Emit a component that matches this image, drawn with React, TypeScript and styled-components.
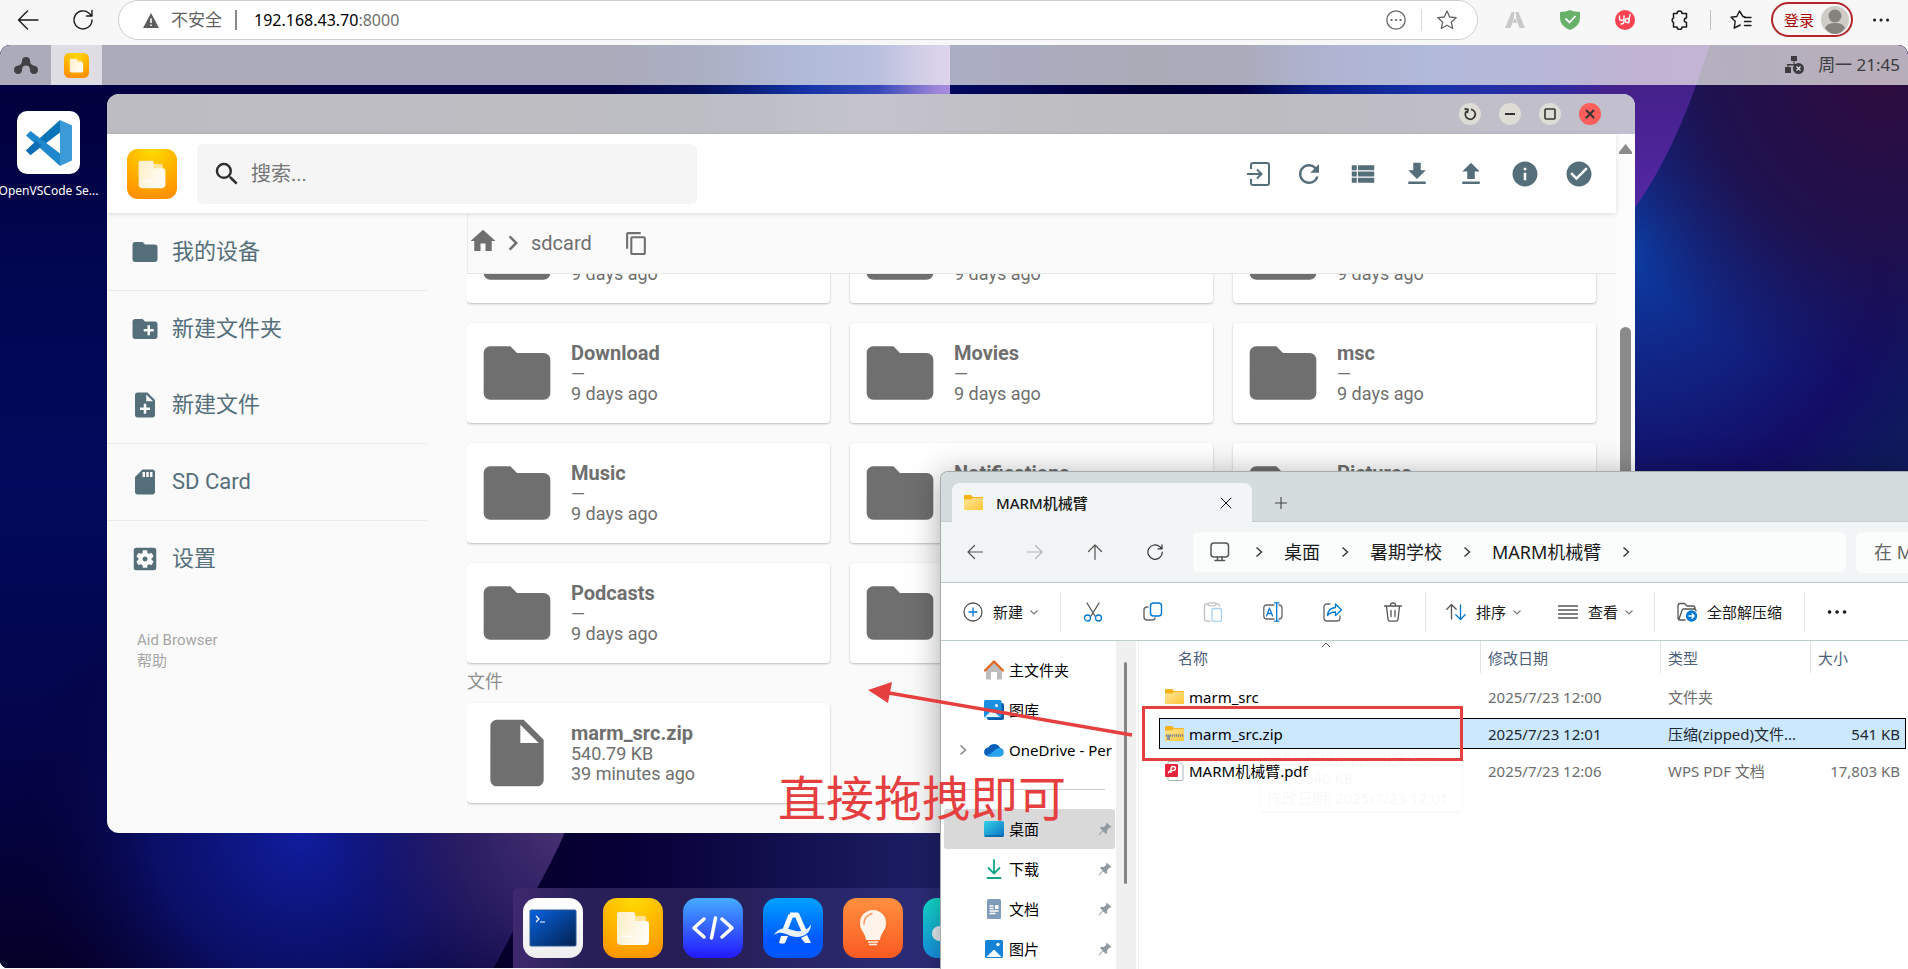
import React from "react";
import styled, { createGlobalStyle } from "styled-components";
import {
  MdFolder,
  MdCreateNewFolder,
  MdNoteAdd,
  MdSdStorage,
  MdSettingsApplications,
  MdInsertDriveFile,
  MdHome,
  MdChevronRight,
  MdContentCopy,
  MdRefresh,
  MdViewList,
  MdFileDownload,
  MdFileUpload,
  MdInfo,
  MdCheckCircle,
  MdSearch,
} from "react-icons/md";

const GlobalStyle = createGlobalStyle`
  *, *::before, *::after { box-sizing: border-box; }
  html, body, #root { height: 100%; }
  body {
    margin: 0;
    overflow: hidden;
    font-family: "Noto Sans", "Noto Sans CJK SC", sans-serif;
    background: #f7f7f7;
  }
  button {
    border: 0;
    padding: 0;
    margin: 0;
    background: none;
    color: inherit;
    font: inherit;
    cursor: pointer;
  }
  input { font: inherit; }
  svg { display: block; flex: none; }
`;

const Page = styled.div`
  position: relative;
  height: 100vh;
  display: grid;
  grid-template-rows: 45px minmax(0, 1fr);
  padding-bottom: 1px;
  overflow: hidden;
`;

/* ---------- browser toolbar ---------- */

const BrowserBar = styled.header`
  display: flex;
  align-items: flex-start;
  padding-left: 8px;
  background: #f7f7f7;
  color: #1b1b1b;
`;

const BarButton = styled.button<{ $w?: number }>`
  flex: none;
  width: ${(p) => p.$w ?? 55}px;
  height: 40px;
  display: flex;
  align-items: center;
  justify-content: center;
`;

const HistoryButtons = styled.div`
  flex: none;
  display: flex;
  gap: 15px;
`;

const BarDivider = styled.span`
  width: 1px;
  height: 20px;
  margin: 10px 3px;
  background: #bdbdbd;
`;

const AddressPill = styled.div`
  flex: 1;
  min-width: 0;
  height: 40px;
  margin: 0 9px 0 15px;
  padding: 0 20px 0 24px;
  display: flex;
  align-items: center;
  border: 1px solid #cfcfcf;
  border-radius: 20px;
  background: #fff;
  font-size: 16px;
  color: #000;
`;

const Insecure = styled.span`
  margin-left: 12px;
  padding-right: 13px;
  border-right: 2px solid #8a8a8a;
  font-size: 17px;
  line-height: 20px;
  color: #5f5f5f;
`;

const Url = styled.span`
  flex: 1;
  margin-left: 17px;
  line-height: 24px;
  span { color: #6f6f6f; }
`;

const PillDivider = styled.span`
  width: 1px;
  height: 22px;
  margin: 0 15px;
  background: #d8d8d8;
`;

const LoginButton = styled.button`
  flex: none;
  width: 82px;
  height: 35px;
  margin: 2px 0 0 3px;
  padding: 0 2px 0 11px;
  display: flex;
  align-items: center;
  justify-content: space-between;
  border: 2px solid #b3262b;
  border-radius: 18px;
  font-size: 15px;
  line-height: 20px;
  color: #a80000;
`;

/* ---------- remote desktop ---------- */

const Desktop = styled.main`
  position: relative;
  min-height: 0;
  display: flex;
  flex-direction: column;
  border-radius: 10px 10px 8px 8px;
  overflow: hidden;
  background: #02003e;
`;

const Wallpaper = styled.svg`
  position: absolute;
  inset: 0;
  width: 100%;
  height: 100%;
`;

const SystemBar = styled.div`
  position: relative;
  height: 40px;
  display: flex;
  background: rgba(244, 243, 240, 0.7);
  color: #3c3c40;
`;

const SystemCell = styled.button<{ $active?: boolean }>`
  width: 51px;
  display: flex;
  align-items: center;
  justify-content: center;
  background: ${(p) => (p.$active ? "rgba(255,255,255,.6)" : "transparent")};
`;

const Clock = styled.div`
  margin-left: auto;
  padding-right: 8px;
  display: flex;
  align-items: center;
  gap: 14px;
  font-size: 17px;
  line-height: 24px;
`;

const Shortcut = styled.button`
  position: relative;
  width: 97px;
  margin-top: 26px;
  display: flex;
  flex-direction: column;
  align-items: center;
  gap: 8px;
  font-size: 12px;
  line-height: 18px;
  color: #fff;
  white-space: nowrap;
`;

const ShortcutTile = styled.span`
  width: 63px;
  height: 63px;
  display: flex;
  align-items: center;
  justify-content: center;
  border-radius: 10px;
  background: #fff;
`;

const Dock = styled.nav`
  position: relative;
  width: 882px;
  height: 80px;
  margin: auto auto 0;
  padding: 10px;
  display: flex;
  gap: 20px;
  border-radius: 6px 6px 0 0;
  background: linear-gradient(90deg, #40296f 0, #2a2059 60px, #261d56 180px, #2b2c76 400px);
`;

const DockIcon = styled.button<{ $bg: string }>`
  width: 60px;
  height: 60px;
  display: flex;
  align-items: center;
  justify-content: center;
  border-radius: 14px;
  background: ${(p) => p.$bg};
`;

/* ---------- file browser window ---------- */

const Win = styled.section`
  position: absolute;
  top: 49px;
  left: 107px;
  right: 273px;
  bottom: 135px;
  display: flex;
  flex-direction: column;
  border-radius: 12px;
  overflow: hidden;
  background: #fafafa;
  font-family: Roboto, "Noto Sans CJK SC", sans-serif;
`;

const TitleBar = styled.div`
  height: 40px;
  flex: none;
  padding-right: 34px;
  display: flex;
  align-items: center;
  justify-content: flex-end;
  gap: 18px;
  background: linear-gradient(90deg, #bdbcc2 0%, #bdbdc2 30%, #bcbfc6 42%, #c5c4ce 50%, #bfbec3 60%, #bcbcc1 76%, #c2c0cf 100%);
`;

const WinButton = styled.button<{ $close?: boolean }>`
  width: 22px;
  height: 22px;
  display: flex;
  align-items: center;
  justify-content: center;
  border-radius: 50%;
  background: ${(p) => (p.$close ? "#ff5f5a" : "#dddcd5")};
`;

const WinBody = styled.div`
  flex: 1;
  min-height: 0;
  display: flex;
`;

const WinContent = styled.div`
  flex: 1;
  min-width: 0;
  display: flex;
  flex-direction: column;
`;

const ScrollTrack = styled.div`
  width: 19px;
  padding: 10px 3px 0;
  display: flex;
  flex-direction: column;
  align-items: center;
  background: #fcfcfc;
`;

const ScrollThumb = styled.div`
  width: 11px;
  height: 420px;
  margin-top: 173px;
  border-radius: 6px;
  background: #8b8b8b;
`;

const AppHeader = styled.div`
  position: relative;
  z-index: 1;
  height: 79px;
  flex: none;
  padding: 0 10px 0 20px;
  display: flex;
  align-items: center;
  gap: 20px;
  background: #fff;
  box-shadow: 0 1px 5px rgba(0, 0, 0, 0.12);
`;

const SearchBox = styled.label`
  width: 500px;
  height: 60px;
  padding: 0 15px;
  display: flex;
  align-items: center;
  gap: 9px;
  border-radius: 6px;
  background: #f5f5f5;
  color: #2f2f2f;
  input {
    flex: 1;
    min-width: 0;
    border: 0;
    padding: 0;
    outline: 0;
    background: none;
    font-size: 20px;
    line-height: 30px;
  }
  input::placeholder { color: #757575; }
`;

const Actions = styled.div`
  margin-left: auto;
  display: flex;
`;

const ActionButton = styled.button<{ $w?: number }>`
  width: ${(p) => p.$w ?? 54}px;
  height: 50px;
  display: flex;
  align-items: center;
  justify-content: center;
  color: #546e7a;
`;

const Columns = styled.div`
  flex: 1;
  min-height: 0;
  display: flex;
`;

const Sidebar = styled.nav`
  width: 320px;
  margin-right: 40px;
  flex: none;
`;

const SideGroup = styled.div`
  padding-top: 1px;
  & + & { border-top: 1px solid #ececec; padding-top: 0; }
`;

const SideItem = styled.button`
  width: 100%;
  height: 76px;
  padding-left: 23px;
  display: flex;
  align-items: center;
  gap: 12px;
  font-size: 22px;
  line-height: 26px;
  color: #546e7a;
`;

const Credits = styled.div`
  padding: 33px 30px 0;
  display: flex;
  flex-direction: column;
  font-size: 15px;
  line-height: 21px;
  color: #a5a5a5;
  a { color: inherit; text-decoration: none; }
`;

const Listing = styled.div`
  flex: 1;
  min-width: 0;
  display: flex;
  flex-direction: column;
  color: #6f6f6f;
`;

const Crumbs = styled.div`
  height: 61px;
  flex: none;
  display: flex;
  align-items: center;
  border-left: 1px solid #ececec;
  border-bottom: 1px solid #e6e6e6;
  font-size: 20px;
  a {
    display: flex;
    color: inherit;
    text-decoration: none;
  }
  a:first-child { padding-bottom: 4px; }
  a + svg { margin-right: 3px; }
  button { margin-left: 32px; }
`;

const Scroller = styled.div`
  flex: 1;
  min-height: 0;
  padding: 0 20px 30px 0;
  display: flex;
  flex-direction: column;
  justify-content: flex-end;
  overflow: hidden;
`;

const CardGrid = styled.div`
  flex: none;
  display: grid;
  grid-template-columns: repeat(3, 1fr);
  gap: 20px;
`;

const SectionTitle = styled.h2`
  margin: 0;
  height: 40px;
  flex: none;
  font-size: 18px;
  font-weight: 400;
  line-height: 38px;
  color: #8f8f8f;
`;

const Card = styled.article`
  height: 100px;
  padding: 0 10px;
  display: flex;
  align-items: center;
  gap: 14px;
  border-radius: 4px;
  background: #fff;
  box-shadow: 0 1px 3px rgba(0, 0, 0, 0.1), 0 1px 2px rgba(0, 0, 0, 0.16);
`;

const CardText = styled.div`
  display: flex;
  flex-direction: column;
  font-size: 18px;
  line-height: 20px;
  strong { font-size: 20px; font-weight: 700; line-height: 22px; }
`;

/* ---------- local explorer window ---------- */

const Explorer = styled.section`
  position: absolute;
  top: 471px;
  left: 940px;
  right: 0;
  bottom: 0;
  display: flex;
  flex-direction: column;
  border: solid #a4abab;
  border-width: 1px 0 0 1px;
  border-radius: 8px 0 0 0;
  overflow: hidden;
  background: #fff;
  font-size: 15px;
  line-height: 20px;
  color: #1a1a1a;
`;

const ExplorerShadow = styled.div`
  position: absolute;
  top: 471px;
  left: 940px;
  right: 0;
  bottom: 0;
  border-radius: 8px 0 0 0;
  box-shadow: 0 4px 32px rgba(0, 0, 0, 0.34);
`;

const TabStrip = styled.div`
  height: 50px;
  flex: none;
  padding-left: 11px;
  display: flex;
  align-items: flex-end;
  background: #d4dcde;
  box-shadow: inset 0 -1px #c6cfd1;
`;

const Tab = styled.div`
  width: 300px;
  height: 39px;
  padding: 0 20px 0 12px;
  display: flex;
  align-items: center;
  gap: 13px;
  border-radius: 8px 8px 0 0;
  background: #f1f5f6;
  font-weight: 500;
  button { margin-left: auto; }
`;

const NewTab = styled.button`
  width: 58px;
  height: 39px;
  display: flex;
  align-items: center;
  justify-content: center;
`;

const NavRow = styled.div`
  height: 61px;
  flex: none;
  padding-left: 4px;
  display: flex;
  align-items: center;
  border-bottom: 1px solid #bdcaca;
  background: #f1f5f6;
`;

const ToolButton = styled.button`
  flex: none;
  width: 60px;
  height: 40px;
  display: flex;
  align-items: center;
  justify-content: center;
`;

const PathBox = styled.div`
  flex: 1;
  min-width: 0;
  height: 40px;
  margin: 0 10px 0 8px;
  padding-left: 17px;
  display: flex;
  align-items: center;
  gap: 20px;
  border-radius: 6px;
  background: #fbfdfd;
  font-size: 18px;
  svg:first-child { margin-right: 4px; }
`;

const PathSearch = styled.input`
  width: 52px;
  height: 41px;
  border: 0;
  padding: 0 0 0 18px;
  border-radius: 6px 0 0 6px;
  outline: 0;
  background: #fbfdfd;
  font-size: 18px;
  &::placeholder { color: #666; }
`;

const CommandBar = styled.div`
  height: 58px;
  flex: none;
  display: flex;
  align-items: center;
  border-bottom: 1px solid #bdcaca;
`;

const Command = styled.button<{ $l?: number; $r?: number }>`
  flex: none;
  height: 40px;
  padding: 0 ${(p) => p.$r ?? 18}px 0 ${(p) => p.$l ?? 18}px;
  display: flex;
  align-items: center;
  gap: 10px;
  span + svg { margin-left: -4px; }
`;

const CommandDivider = styled.span`
  width: 1px;
  height: 40px;
  margin: 0 2px;
  background: #e5e5e5;
`;

const ExplorerBody = styled.div`
  flex: 1;
  min-height: 0;
  display: flex;
`;

const Places = styled.nav`
  width: 175px;
  flex: none;
  padding: 9px 1px 0 3px;
  overflow: hidden;
`;

const Place = styled.button<{ $active?: boolean }>`
  width: 100%;
  height: 40px;
  padding: 0 3px 0 14px;
  display: grid;
  grid-template-columns: 14px 20px minmax(0, 1fr) auto;
  column-gap: 5px;
  align-items: center;
  border-radius: 3px;
  background: ${(p) => (p.$active ? "#d9d9d9" : "transparent")};
  text-align: left;
  white-space: nowrap;
  color: #000;
`;

const PlaceIcon = styled.span`
  width: 20px;
  margin-left: 7px;
`;

const PlaceLabel = styled.span`
  margin-left: 7px;
`;

const PlaceRule = styled.hr`
  height: 1px;
  margin: 19px 10px 19px 20px;
  border: 0;
  background: #c9d0d2;
`;

const PlacesTrack = styled.div`
  width: 20px;
  flex: none;
  padding: 21px 0 0 8px;
  background: #f0f0f0;
  &::before {
    content: "";
    display: block;
    width: 3px;
    height: 222px;
    border-radius: 2px;
    background: #858585;
  }
`;

const FilesPane = styled.div`
  position: relative;
  flex: 1;
  min-width: 0;
  margin-left: 2px;
  padding: 0 2px 0 20px;
  border-left: 1px solid #efefef;
`;

const SortMark = styled.svg`
  position: absolute;
  top: 1px;
  left: 182px;
`;

const FileTable = styled.table`
  width: 100%;
  table-layout: fixed;
  border-collapse: separate;
  border-spacing: 0;
  th {
    height: 37px;
    padding: 0 0 4px 8px;
    font-weight: 400;
    text-align: left;
    color: #4c607a;
    background: linear-gradient(#e2e2e2, #e2e2e2) 0 0 / 1px 32px no-repeat;
  }
  th:first-child { padding-left: 19px; background: none; }
  td {
    height: 37px;
    padding: 0 0 0 8px;
    border: solid transparent;
    border-width: 3px 0;
    background-clip: padding-box;
    color: #6d6d6d;
    white-space: nowrap;
  }
  td:first-child { padding-left: 6px; color: #000; }
  td:last-child { padding-right: 6px; text-align: right; }
`;

const FileRow = styled.tr<{ $selected?: boolean }>`
  ${(p) =>
    p.$selected
      ? `
    td { background-color: #cce8ff; color: #1e2a33; box-shadow: inset 0 1px #000, inset 0 -1px #000; }
    td:first-child { box-shadow: inset 1px 0 #000, inset 0 1px #000, inset 0 -1px #000; }
    td:last-child { box-shadow: inset -1px 0 #000, inset 0 1px #000, inset 0 -1px #000; }
  `
      : ""}
`;

const FileName = styled.span`
  display: flex;
  align-items: center;
  gap: 5px;
`;

const FadingTip = styled.div`
  position: absolute;
  top: 107px;
  left: 122px;
  width: 200px;
  padding: 0 4px 3px 6px;
  border-radius: 4px;
  box-shadow: 0 2px 4px rgba(0, 0, 0, 0.04);
  line-height: 20px;
  white-space: nowrap;
  color: rgba(0, 0, 0, 0.05);
`;

/* ---------- annotation ---------- */

const Marker = styled.svg`
  position: absolute;
  top: 670px;
  left: 860px;
`;

const MarkerBox = styled.div`
  position: absolute;
  top: 706px;
  left: 1142px;
  width: 321px;
  height: 55px;
  border: 3px solid #e5403f;
`;

const MarkerText = styled.p`
  position: absolute;
  top: 765px;
  left: 778px;
  margin: 0;
  font-family: "Noto Sans CJK SC", sans-serif;
  font-size: 48px;
  line-height: 60px;
  white-space: nowrap;
  color: #e5403f;
`;

/* ---------- drawings ---------- */

const Line: React.FC<{
  s?: number;
  w?: number;
  c?: string;
  box?: number;
  children: React.ReactNode;
}> = ({ s = 20, w = 1.3, c = "currentColor", box = 20, children }) => (
  <svg
    width={s}
    height={s}
    viewBox={`0 0 ${box} ${box}`}
    fill="none"
    stroke={c}
    strokeWidth={w}
    strokeLinecap="round"
    strokeLinejoin="round"
    aria-hidden="true"
  >
    {children}
  </svg>
);

const BLUE = "#0078d4";

const Backdrop = () => (
  <Wallpaper viewBox="0 0 1908 923" preserveAspectRatio="none" aria-hidden="true">
    <defs>
      <linearGradient id="top" x1="0" x2="1" y1="0" y2="0">
        <stop offset="0" stopColor="#02003c" />
        <stop offset=".32" stopColor="#020044" />
        <stop offset=".37" stopColor="#04125e" />
        <stop offset=".42" stopColor="#1432a4" />
        <stop offset=".46" stopColor="#3447b8" />
        <stop offset=".49" stopColor="#9a84d8" />
        <stop offset=".4979" stopColor="#a98cdf" />
        <stop offset=".498" stopColor="#030860" />
        <stop offset=".6" stopColor="#010036" />
        <stop offset=".65" stopColor="#020040" />
        <stop offset=".69" stopColor="#0a1c84" />
        <stop offset=".75" stopColor="#1832aa" />
        <stop offset=".81" stopColor="#2c2ba2" />
        <stop offset=".86" stopColor="#4b208c" />
        <stop offset="1" stopColor="#5a2090" />
      </linearGradient>
      <linearGradient id="left" x1="0" x2="0" y1="0" y2="1">
        <stop offset="0" stopColor="#02003c" />
        <stop offset=".2" stopColor="#010650" />
        <stop offset=".45" stopColor="#010a5c" />
        <stop offset=".75" stopColor="#04044a" />
        <stop offset="1" stopColor="#050028" />
      </linearGradient>
      <linearGradient id="edge" x1="0" x2="0" y1="0" y2="1">
        <stop offset="0" stopColor="#44218a" />
        <stop offset="1" stopColor="#5f2ab4" />
      </linearGradient>
      <radialGradient id="deep" gradientUnits="userSpaceOnUse" cx="1635" cy="200" r="330">
        <stop offset="0" stopColor="#0c3ea6" />
        <stop offset=".3" stopColor="#10298a" />
        <stop offset=".75" stopColor="#130d66" />
        <stop offset="1" stopColor="#0f1a5c" />
      </radialGradient>
      <radialGradient id="plum" gradientUnits="userSpaceOnUse" cx="1880" cy="30" r="310">
        <stop offset="0" stopColor="#2e0c3e" />
        <stop offset=".55" stopColor="#20104a" stopOpacity=".9" />
        <stop offset="1" stopColor="#1a1250" stopOpacity="0" />
      </radialGradient>
      <radialGradient id="glow" gradientUnits="userSpaceOnUse" cx="300" cy="790" r="290">
        <stop offset="0" stopColor="#101d9e" />
        <stop offset=".5" stopColor="#0c1272" stopOpacity=".8" />
        <stop offset="1" stopColor="#050030" stopOpacity="0" />
      </radialGradient>
      <radialGradient id="mauve" gradientUnits="userSpaceOnUse" cx="570" cy="780" r="240">
        <stop offset="0" stopColor="#4b3375" />
        <stop offset=".5" stopColor="#2c1e64" stopOpacity=".85" />
        <stop offset="1" stopColor="#1a1470" stopOpacity="0" />
      </radialGradient>
      <linearGradient id="base" x1="0" x2="1" y1="0" y2="0">
        <stop offset="0" stopColor="#05002a" />
        <stop offset=".3" stopColor="#070038" />
        <stop offset="1" stopColor="#1f2268" />
      </linearGradient>
    </defs>
    <rect width="1908" height="923" fill="url(#top)" />
    <path d="M0 40H600V923H0Z" fill="url(#left)" />
    <path d="M0 40H600V49H0Z" fill="#020042" />
    <rect y="500" width="600" height="423" fill="url(#glow)" />
    <rect x="300" y="500" width="300" height="423" fill="url(#mauve)" />
    <path d="M575 760C560 810 520 870 494 923H960V700H590Z" fill="url(#base)" />
    <path d="M1600 40H1700V240H1600Z" fill="url(#edge)" />
    <path d="M1710 0C1690 60 1670 115 1630 170V923H1908V0Z" fill="url(#deep)" />
    <path d="M1710 0C1690 60 1670 115 1630 170V400H1908V0Z" fill="url(#plum)" />
  </Wallpaper>
);

const FilesGlyph: React.FC<{ size: number; tile?: boolean }> = ({ size, tile = true }) => (
  <svg width={size} height={size} viewBox="0 0 60 60" aria-hidden="true">
    <defs>
      <radialGradient id={`fg${size}`} cx=".5" cy="0" r="1">
        <stop offset="0" stopColor="#ffdc00" />
        <stop offset="1" stopColor="#ff9000" />
      </radialGradient>
      <linearGradient id={`fp${size}`} x1="0" x2="1" y1=".6" y2="1">
        <stop offset="0" stopColor="#fff1cf" />
        <stop offset="1" stopColor="#fff" />
      </linearGradient>
    </defs>
    {tile && <rect width="60" height="60" rx="13" fill={`url(#fg${size})`} />}
    <path d="M31 18h10q2 0 2 2v10H31Z" fill="#ffe49a" />
    <path d="M16 14h14q2 0 2 2v7h11q3 0 3 3v17q0 4-4 4H18q-4 0-4-4V16q0-2 2-2Z" fill={`url(#fp${size})`} />
    <path d="M18 38.500h10" stroke="#fff" strokeWidth="1.500" strokeLinecap="round" />
  </svg>
);

const FolderGlyph: React.FC<{ zip?: boolean }> = ({ zip }) => (
  <svg width="19" height="16" viewBox="0 0 19 16" aria-hidden="true">
    <defs>
      <linearGradient id="fold" x1="0" x2="1" y1="0" y2="1">
        <stop offset="0" stopColor="#ffe59a" />
        <stop offset="1" stopColor="#fdc637" />
      </linearGradient>
    </defs>
    <path d="M0 1q0-1 1-1h6l2 2h9q1 0 1 1v5H0Z" fill="#f4b21b" />
    <path d="M0 4.500h7l1.500-1.500H18q1 0 1 1v10q0 1-1 1H1q-1 0-1-1Z" fill="url(#fold)" />
    {zip && (
      <>
        <path d="M1 9.500h18" stroke="#7f8790" strokeWidth="2.500" strokeDasharray="1.200 .8" />
        <path d="M2 9h3v5H2Z" fill="#8d949b" />
      </>
    )}
  </svg>
);

const PdfGlyph = () => (
  <svg width="19" height="20" viewBox="0 0 19 20" aria-hidden="true">
    <path d="M4 .5h10l4 4v14q0 1-1 1H4q-1 0-1-1V1Z" fill="#fff" stroke="#a9b3b3" />
    <rect y="3" width="13" height="13" rx="1" fill="#e8243c" />
    <path d="M3.500 12.500c0-3 2-3 4-3s3-1 3-2.200S9.400 5.500 8 5.500 6 6.500 6 8v4" fill="none" stroke="#fff" strokeWidth="1.300" />
  </svg>
);

const Chevron: React.FC<{ down?: boolean; c?: string }> = ({ down, c }) => (
  <svg
    width="10"
    height="12"
    viewBox="0 0 10 12"
    fill="none"
    stroke={c ?? (down ? "#777" : "#3a3a3a")}
    strokeWidth={down ? 1.1 : 1.5}
    aria-hidden="true"
  >
    <path d={down ? "M1.500 4.500 5 8l3.500-3.500" : "M2.500 1.500 7.500 6l-5 4.500"} />
  </svg>
);

const Pin = () => (
  <svg width="14" height="14" viewBox="0 0 14 14" fill="#8f9ba3" aria-hidden="true">
    <path d="M8.500.5 13.500 5l-1.500.8-1 .1-2 2.300.2 2.800-1.200 1L5 9.300 1.200 13.300.5 13.500l.3-1L4.500 8.500 2 6l1-1.200 2.800.1L8 3Z" />
  </svg>
);

const placeIcons: Record<string, React.ReactNode> = {
  home: (
    <svg width="20" height="20" viewBox="0 0 20 20" aria-hidden="true">
      <path d="M2 9 10 2l8 7v9.500q0 1-1 1h-4V12H7v7.500H3q-1 0-1-1Z" fill="#bdbdbd" />
      <path d="M1 10.500 10 1.500l9 9" fill="none" stroke="#e2671c" strokeWidth="2.200" strokeLinecap="round" />
    </svg>
  ),
  gallery: (
    <svg width="20" height="20" viewBox="0 0 20 20" aria-hidden="true">
      <rect x="3" y="3" width="17" height="17" rx="2" fill="#0a5ca8" />
      <rect width="17.500" height="17.500" rx="1.500" fill="#1b8fe0" />
      <path d="M1 17 8 10l8 7Z" fill="#e8f4ff" />
      <circle cx="12.500" cy="5.500" r="1.500" fill="#fff" />
    </svg>
  ),
  cloud: (
    <svg width="20" height="20" viewBox="0 0 20 20" aria-hidden="true">
      <path d="M5 16.500a4.500 4.500 0 0 1-.5-9A6.500 6.500 0 0 1 16 8a4.300 4.300 0 0 1 0 8.500Z" fill="#1a86dd" />
      <path d="M4.500 7.500A6.500 6.500 0 0 1 16 8c-2 0-3 1-4 2L2 15.500a4.500 4.500 0 0 1 2.500-8Z" fill="#0a5fb8" />
      <path d="M10 11c2-3 6-4 8.500-1a4.200 4.200 0 0 1-2.500 6.500H4Z" fill="#2aa3ee" />
    </svg>
  ),
  desktop: (
    <svg width="20" height="20" viewBox="0 0 20 20" aria-hidden="true">
      <defs>
        <linearGradient id="dsk" x1="0" x2="1" y1="0" y2="1">
          <stop offset="0" stopColor="#35d3e8" />
          <stop offset="1" stopColor="#0a6fc4" />
        </linearGradient>
      </defs>
      <rect y="2" width="20" height="16" rx="1.500" fill="url(#dsk)" />
      <path d="M1 17h18" stroke="#0a4f8c" />
    </svg>
  ),
  download: (
    <Line s={20} w={1.8} c="#17a58a">
      <path d="M10 1v13M4.500 9 10 14.500 15.500 9M3.500 19h13" />
    </Line>
  ),
  docs: (
    <svg width="20" height="20" viewBox="0 0 20 20" aria-hidden="true">
      <rect x="3" width="14" height="20" rx="1.500" fill="#7f9cba" />
      <path d="M5.500 7h4M5.500 9.500h4M5.500 12h9M5.500 14.500h6" stroke="#fff" strokeWidth="1.300" />
      <rect x="11" y="6" width="3.500" height="4" fill="#fff" />
    </svg>
  ),
  pictures: (
    <svg width="20" height="20" viewBox="0 0 20 20" aria-hidden="true">
      <rect x="1" y="1" width="18" height="18" rx="1.500" fill="#1583d8" />
      <path d="M2.500 18 10 10.500 17.500 18Z" fill="#f2f9ff" />
      <circle cx="14" cy="5.500" r="1.700" fill="#fff" />
    </svg>
  ),
};

const places = [
  { label: "桌面", icon: "desktop", active: true },
  { label: "下载", icon: "download" },
  { label: "文档", icon: "docs" },
  { label: "图片", icon: "pictures" },
];

const folders = [
  "Alarms", "Android", "DCIM",
  "Download", "Movies", "msc",
  "Music", "Notifications", "Pictures",
  "Podcasts", "Ringtones",
];

const files = [
  { name: "marm_src", kind: "folder", date: "2025/7/23 12:00", type: "文件夹", size: "" },
  { name: "marm_src.zip", kind: "zip", date: "2025/7/23 12:01", type: "压缩(zipped)文件...", size: "541 KB" },
  { name: "MARM机械臂.pdf", kind: "pdf", date: "2025/7/23 12:06", type: "WPS PDF 文档", size: "17,803 KB" },
];

const Browser = () => (
  <BrowserBar>
    <HistoryButtons>
      <BarButton $w={40} aria-label="后退">
        <Line s={22} box={22} w={1.4}><path d="M21 11H1.500M10.500 2 1.500 11l9 9" /></Line>
      </BarButton>
      <BarButton $w={40} aria-label="刷新">
        <Line s={22} box={22} w={1.4}><path d="M20 11a9 9 0 1 1-3-6.800L20 7M20 1.500V7h-5.500" /></Line>
      </BarButton>
    </HistoryButtons>
    <AddressPill>
      <svg width="16" height="15" viewBox="0 0 16 15" aria-hidden="true">
        <path d="M8 0 16 15H0Z" fill="#5d5d5d" />
        <path d="M8 5.500v4.500M8 11.500v1.500" stroke="#fff" strokeWidth="1.600" />
      </svg>
      <Insecure>不安全</Insecure>
      <Url>192.168.43.70<span>:8000</span></Url>
      <Line s={20} w={1.3} c="#666">
        <circle cx="10" cy="10" r="9.200" />
        <path d="M5.500 10h.1M10 10h.1M14.500 10h.1" strokeWidth="2.200" />
      </Line>
      <PillDivider />
      <Line s={20} w={1.3} c="#666">
        <path d="m10 1 2.700 6 6.500.7-4.900 4.300 1.400 6.500L10 15.200l-5.700 3.300L5.700 12 .8 7.700l6.500-.7Z" />
      </Line>
    </AddressPill>
    <BarButton aria-label="扩展">
      <svg width="20" height="18" viewBox="0 0 20 18" fill="#c9c9c9" aria-hidden="true">
        <path d="M6.500 1H9.500L8.500 9 5.500 17H0ZM10.500 1h3L20 17h-5.500l-3-8ZM9.500 8h1l1.500 4H8Z" />
      </svg>
    </BarButton>
    <BarButton aria-label="安全防护">
      <svg width="20" height="20" viewBox="0 0 20 20" aria-hidden="true">
        <path d="M0 2Q6 2 10 0q4 2 10 2v6q0 8-10 12Q0 16 0 8Z" fill="#68b168" />
        <path d="m5.500 8.500 4 4 6-6.500" fill="none" stroke="#fff" strokeWidth="1.800" />
      </svg>
    </BarButton>
    <BarButton aria-label="翻译">
      <svg width="20" height="20" viewBox="0 0 20 20" fill="none" stroke="#fff" strokeWidth="1.400" strokeLinecap="round" aria-hidden="true">
        <circle cx="10" cy="10" r="10" fill="#fb4351" stroke="none" />
        <path d="M4.500 6v2.500q0 2 1.800 2T9 8.500V6M9 8.500v3Q9 14 6 14M15 4.500l-1.500 8.500" />
        <circle cx="12.300" cy="10.500" r="2" />
      </svg>
    </BarButton>
    <BarButton aria-label="扩展程序">
      <Line s={20} w={1.5}>
        <path d="M7 3.500a2.500 2.500 0 0 1 5 0h4.500V8a2 2 0 0 0 0 4.500V17H12a2.500 2.500 0 0 1-5 0H3.500v-4.500A2.500 2.500 0 0 1 3.500 8V3.500Z" />
      </Line>
    </BarButton>
    <BarDivider />
    <BarButton $w={54} aria-label="收藏夹">
      <Line s={22} box={22} w={1.4}>
        <path d="M15 8 13 7.500 9.500 2 6.800 7.500 1 8.300l4.200 4L4.200 19l6-3M14.500 8.500H21M14.500 12.500H21M14.500 16.500H21" />
      </Line>
    </BarButton>
    <LoginButton>
      登录
      <svg width="28" height="28" viewBox="0 0 28 28" aria-hidden="true">
        <circle cx="14" cy="14" r="14" fill="#cfccc8" />
        <circle cx="14" cy="10" r="6.500" fill="#86827d" />
        <path d="M4 22q2-5 10-5t10 5q-4 6-10 6T4 22Z" fill="#86827d" />
      </svg>
    </LoginButton>
    <BarButton aria-label="更多">
      <Line s={18} box={18} w={3} c="#222"><path d="M2.500 9h.1M9 9h.1M15.500 9h.1" /></Line>
    </BarButton>
  </BrowserBar>
);

const FileManager = () => (
  <Win aria-label="文件管理">
    <TitleBar>
      <WinButton aria-label="重新加载">
        <Line s={14} box={14} w={1.7} c="#333"><path d="M8 2.300A5 5 0 1 1 3.500 4M1.500 1.800 5 2.300 4.300 6" strokeLinecap="butt" /></Line>
      </WinButton>
      <WinButton aria-label="最小化">
        <Line s={12} box={12} w={1.8} c="#333"><path d="M1 6h10" strokeLinecap="butt" /></Line>
      </WinButton>
      <WinButton aria-label="最大化">
        <Line s={12} box={12} w={1.6} c="#333"><rect x="1" y="1" width="10" height="10" rx="1" /></Line>
      </WinButton>
      <WinButton $close aria-label="关闭">
        <Line s={12} box={12} w={2} c="#333"><path d="m2 2 8 8M10 2 2 10" strokeLinecap="butt" /></Line>
      </WinButton>
    </TitleBar>
    <WinBody>
      <WinContent>
        <AppHeader>
          <FilesGlyph size={50} />
          <SearchBox>
            <MdSearch size={30} />
            <input type="text" placeholder="搜索..." aria-label="搜索" />
          </SearchBox>
          <Actions>
            <ActionButton $w={46} aria-label="导入">
              <Line s={24} box={24} w={2}>
                <path d="M4 8V4q0-2 2-2h14q2 0 2 2v18q0 2-2 2H6q-2 0-2-2v-4M0 13h14M10 8.500 14.500 13 10 17.500" strokeLinecap="butt" strokeLinejoin="miter" transform="translate(0 -1)" />
              </Line>
            </ActionButton>
            <ActionButton aria-label="刷新"><MdRefresh size={30} /></ActionButton>
            <ActionButton aria-label="列表视图"><MdViewList size={30} /></ActionButton>
            <ActionButton aria-label="下载"><MdFileDownload size={30} /></ActionButton>
            <ActionButton aria-label="上传"><MdFileUpload size={30} /></ActionButton>
            <ActionButton aria-label="信息"><MdInfo size={30} /></ActionButton>
            <ActionButton aria-label="选择多个"><MdCheckCircle size={30} /></ActionButton>
          </Actions>
        </AppHeader>
        <Columns>
          <Sidebar>
            <SideGroup>
              <SideItem><MdFolder size={30} />我的设备</SideItem>
            </SideGroup>
            <SideGroup>
              <SideItem><MdCreateNewFolder size={30} />新建文件夹</SideItem>
              <SideItem><MdNoteAdd size={30} />新建文件</SideItem>
            </SideGroup>
            <SideGroup>
              <SideItem><MdSdStorage size={30} />SD Card</SideItem>
            </SideGroup>
            <SideGroup>
              <SideItem><MdSettingsApplications size={30} />设置</SideItem>
            </SideGroup>
            <Credits>
              <span>Aid Browser</span>
              <a href="#help">帮助</a>
            </Credits>
          </Sidebar>
          <Listing>
            <Crumbs>
              <a href="#home" aria-label="主页"><MdHome size={30} /></a>
              <MdChevronRight size={30} />
              <a href="#sdcard">sdcard</a>
              <button aria-label="复制路径"><MdContentCopy size={25} /></button>
            </Crumbs>
            <Scroller>
              <CardGrid>
                {folders.map((name) => (
                  <Card key={name}>
                    <MdFolder size={80} />
                    <CardText>
                      <strong>{name}</strong>
                      <span>—</span>
                      <span>9 days ago</span>
                    </CardText>
                  </Card>
                ))}
              </CardGrid>
              <SectionTitle>文件</SectionTitle>
              <CardGrid>
                <Card>
                  <MdInsertDriveFile size={80} />
                  <CardText>
                    <strong>marm_src.zip</strong>
                    <span>540.79 KB</span>
                    <span>39 minutes ago</span>
                  </CardText>
                </Card>
              </CardGrid>
            </Scroller>
          </Listing>
        </Columns>
      </WinContent>
      <ScrollTrack>
        <svg width="13" height="10" viewBox="0 0 13 10" aria-hidden="true">
          <path d="M6.500 0 13 8v2H0V8Z" fill="#8b8b8b" />
        </svg>
        <ScrollThumb />
      </ScrollTrack>
    </WinBody>
  </Win>
);

const LocalExplorer = () => (
  <Explorer aria-label="MARM机械臂">
    <TabStrip>
      <Tab>
        <FolderGlyph />
        <span>MARM机械臂</span>
        <button aria-label="关闭标签页">
          <Line s={12} box={12} w={1}><path d="m1 1 10 10M11 1 1 11" /></Line>
        </button>
      </Tab>
      <NewTab aria-label="新建标签页">
        <Line s={12} box={12} w={1.1} c="#444"><path d="M6 0v12M0 6h12" /></Line>
      </NewTab>
    </TabStrip>
    <NavRow>
      <ToolButton aria-label="后退">
        <Line s={16} box={16} w={1.2} c="#555"><path d="M15.500 8H1M7.500 1.500 1 8l6.500 6.500" /></Line>
      </ToolButton>
      <ToolButton aria-label="前进">
        <Line s={16} box={16} w={1.2} c="#b0b4b5"><path d="M.5 8H15M8.500 1.500 15 8l-6.500 6.500" /></Line>
      </ToolButton>
      <ToolButton aria-label="上移">
        <Line s={16} box={16} w={1.2} c="#555"><path d="M8 15.500V1M1.500 7.500 8 1l6.500 6.500" /></Line>
      </ToolButton>
      <ToolButton aria-label="刷新">
        <Line s={16} box={16} w={1.2} c="#333"><path d="M15.300 8a7.200 7.200 0 1 1-2.500-5.400L15 4.700M15 .8v4h-4" /></Line>
      </ToolButton>
      <PathBox>
        <Line s={20} w={1.5} c="#555"><rect x="1" y="1" width="17.500" height="14" rx="3" /><path d="M7.500 15v3M12 15v3M5 18.500h9.500" /></Line>
        <Chevron />
        <span>桌面</span>
        <Chevron />
        <span>暑期学校</span>
        <Chevron />
        <span>MARM机械臂</span>
        <Chevron />
      </PathBox>
      <PathSearch type="text" placeholder="在 M" aria-label="在文件夹中搜索" />
    </NavRow>
    <CommandBar>
      <Command $l={22} $r={19}>
        <Line s={20} w={1.3} c="#555"><circle cx="10" cy="10" r="9" /><path d="M10 6v8M6 10h8" stroke={BLUE} /></Line>
        <span>新建</span>
        <Chevron down />
      </Command>
      <CommandDivider />
      <ToolButton aria-label="剪切">
        <Line s={20} w={1.3} c="#555"><path d="M4 1l8 13M16 1 8 14" /><g stroke={BLUE}><circle cx="4.500" cy="16" r="3" /><circle cx="15.500" cy="16" r="3" /></g></Line>
      </ToolButton>
      <ToolButton aria-label="复制">
        <Line s={20} w={1.4} c="#666"><path d="M5 5H4Q1 5 1 8v7q0 3 3 3h5q3 0 3-2" /><rect x="7.500" y="1" width="11" height="13" rx="3" stroke={BLUE} /></Line>
      </ToolButton>
      <ToolButton aria-label="粘贴">
        <Line s={20} w={1.3} c="#c3c3c3"><path d="M5 2H3Q1.500 2 1.500 4v13.500q0 1.500 1.500 1.500h4M13 2h2q1.500 0 1.500 2" /><rect x="5" y=".8" width="8" height="3" rx="1.500" /><rect x="9" y="6.500" width="9.500" height="12.800" rx="2" stroke="#a5d1f2" /></Line>
      </ToolButton>
      <ToolButton aria-label="重命名">
        <Line s={20} w={1.3} c="#666"><path d="M11 3H4Q.8 3 .8 6v8q0 3 3.200 3h7M16 3q3 0 3 3v8q0 3-3 3" /><path d="M11.500.8h4.500M11.500 19.200h4.500M13.700.8v18.400M3.500 14 6.500 6l3 8M4.500 11.500h4" stroke={BLUE} /></Line>
      </ToolButton>
      <ToolButton aria-label="共享">
        <Line s={20} w={1.3} c="#666"><path d="M7 2H4Q1 2 1 5v11q0 3 3 3h10q3 0 3-3v-2" /><path d="M12.500 2 18.500 8l-6 5.500V10q-5 0-8 3.500.5-7.500 8-8Z" stroke={BLUE} /></Line>
      </ToolButton>
      <ToolButton aria-label="删除">
        <Line s={20} w={1.3} c="#555"><path d="M1.500 4h17M7.500 4V3q0-2 2.500-2t2.500 2v1M3.500 4.500 5 17.500q.2 1.700 2 1.700h6q1.800 0 2-1.700l1.500-13M8 8.500v6M12 8.500v6" /></Line>
      </ToolButton>
      <CommandDivider />
      <Command>
        <Line s={20} w={1.3} c="#555"><path d="M5.500 17V2.500M.8 7.200 5.500 2.500l4.700 4.700" /><path d="M14.500 3v14.500M9.800 12.800l4.700 4.700 4.700-4.700" stroke={BLUE} /></Line>
        <span>排序</span>
        <Chevron down />
      </Command>
      <Command>
        <Line s={20} w={1.3} c="#555"><path d="M.5 4h19M.5 8h19M.5 12h19M.5 16h19" /></Line>
        <span>查看</span>
        <Chevron down />
      </Command>
      <CommandDivider />
      <Command $l={20} $r={20}>
        <Line s={20} w={1.3} c="#555">
          <path d="M8 18H3q-2 0-2-2V4q0-2.500 2-2.500h4.500L10 4h6q2 0 2 2v1M2 17 5 8.500Q5.500 7 7 7h10q2 0 2 2" />
          <circle cx="14.500" cy="14" r="5" fill={BLUE} stroke={BLUE} />
          <path d="M12 14h5M15 11.800l2.200 2.200-2.200 2.200" stroke="#fff" />
        </Line>
        <span>全部解压缩</span>
      </Command>
      <CommandDivider />
      <ToolButton aria-label="更多">
        <Line s={20} w={3.6} c="#1a1a1a"><path d="M2.500 10h.1M10 10h.1M17.500 10h.1" /></Line>
      </ToolButton>
    </CommandBar>
    <ExplorerBody>
      <Places>
        <Place><span /><PlaceIcon>{placeIcons.home}</PlaceIcon><PlaceLabel>主文件夹</PlaceLabel></Place>
        <Place><span /><PlaceIcon>{placeIcons.gallery}</PlaceIcon><PlaceLabel>图库</PlaceLabel></Place>
        <Place><Chevron c="#888" /><PlaceIcon>{placeIcons.cloud}</PlaceIcon><PlaceLabel>OneDrive - Per</PlaceLabel></Place>
        <PlaceRule />
        {places.map((p) => (
          <Place key={p.label} $active={p.active}>
            <span />
            <PlaceIcon>{placeIcons[p.icon]}</PlaceIcon>
            <PlaceLabel>{p.label}</PlaceLabel>
            <Pin />
          </Place>
        ))}
      </Places>
      <PlacesTrack />
      <FilesPane>
        <SortMark width="10" height="6" viewBox="0 0 10 6" fill="none" stroke="#555" aria-hidden="true">
          <path d="M1 5 5 1l4 4" />
        </SortMark>
        <FileTable>
          <colgroup>
            <col />
            <col width="180" />
            <col width="150" />
            <col width="96" />
          </colgroup>
          <thead>
            <tr>
              <th scope="col">名称</th>
              <th scope="col">修改日期</th>
              <th scope="col">类型</th>
              <th scope="col">大小</th>
            </tr>
          </thead>
          <tbody>
            {files.map((f) => (
              <FileRow key={f.name} $selected={f.kind === "zip"}>
                <td>
                  <FileName>
                    {f.kind === "pdf" ? <PdfGlyph /> : <FolderGlyph zip={f.kind === "zip"} />}
                    <span>{f.name}</span>
                  </FileName>
                </td>
                <td>{f.date}</td>
                <td>{f.type}</td>
                <td>{f.size}</td>
              </FileRow>
            ))}
          </tbody>
        </FileTable>
        <FadingTip role="tooltip">
          <div>类型: 压缩(zipped)文件夹</div>
          <div>大小: 540 KB</div>
          <div>修改日期: 2025/7/23 12:01</div>
        </FadingTip>
      </FilesPane>
    </ExplorerBody>
  </Explorer>
);

export default function App() {
  return (
    <>
      <GlobalStyle />
      <Page>
        <Browser />
        <Desktop>
          <Backdrop />
          <SystemBar>
            <SystemCell aria-label="启动器">
              <svg width="24" height="17" viewBox="0 0 24 17" aria-hidden="true">
                <path d="M12 0a4 4 0 0 1 4 4c0 2.500 1.500 4 4 4.800A4.200 4.200 0 0 1 24 13c0 2.500-1.800 4-4 4-2.500 0-4.200-1.800-4-4.200C16 10 14.500 8.500 12 8.500S8 10 8 12.800C8.200 15.200 6.500 17 4 17c-2.200 0-4-1.500-4-4a4.200 4.200 0 0 1 4-4.200C6.500 8 8 6.500 8 4a4 4 0 0 1 4-4Z" fill="#414045" />
              </svg>
            </SystemCell>
            <SystemCell $active aria-label="文件管理"><FilesGlyph size={25} /></SystemCell>
            <Clock>
              <svg width="20" height="18" viewBox="0 0 20 18" fill="#3c3c40" aria-hidden="true">
                <path d="M7 0h6v5H7ZM1 11h6v6H1ZM9.500 5h1v4h-1ZM3 8h14v1.500H3ZM3.500 9h1v2h-1Z" />
                <circle cx="14.500" cy="12.500" r="5.500" />
                <path d="m12.500 10.500 4 4M16.500 10.500l-4 4" stroke="#d8d6dc" strokeWidth="1.400" />
              </svg>
              周一 21:45
            </Clock>
          </SystemBar>
          <Shortcut>
            <ShortcutTile>
              <svg width="46" height="46" viewBox="0 0 46 46" aria-hidden="true">
                <path d="M34 0 0 30.500l4.500 4.500L34 12.500Z" fill="#0a74b8" />
                <path d="M4.500 11 0 15.500 34 46V33.500Z" fill="#1f88cc" />
                <path d="M0 30.500 10 21l5.500 4.500L4.500 35Z" fill="#0e6db4" />
                <path d="M34 0 46 5.500v35L34 46Z" fill="#3c9ad6" />
              </svg>
            </ShortcutTile>
            OpenVSCode Se...
          </Shortcut>
          <Dock>
            <DockIcon $bg="linear-gradient(#fff, #eeeeee)" aria-label="终端">
              <svg width="48" height="38" viewBox="0 0 48 38" aria-hidden="true">
                <defs>
                  <linearGradient id="term" x1="0" x2="1" y1="0" y2="1">
                    <stop offset="0" stopColor="#0763e0" />
                    <stop offset="1" stopColor="#04214f" />
                  </linearGradient>
                </defs>
                <rect x="1" y="1" width="46" height="36" rx="1" fill="url(#term)" stroke="#2a5a94" />
                <path d="m7 7 3 3-3 3M11 13h5" fill="none" stroke="#fff" strokeWidth="1.200" />
              </svg>
            </DockIcon>
            <DockIcon $bg="radial-gradient(circle at 50% 0, #ffdc00, #ff9000)" aria-label="文件"><FilesGlyph size={60} tile={false} /></DockIcon>
            <DockIcon $bg="linear-gradient(#45acff, #2418ff)" aria-label="代码">
              <Line s={44} box={44} w={3} c="#fff"><path d="M13 13 3 22l10 9M31 13l10 9-10 9" strokeWidth="3.500" /><path d="M24.500 12l-4 20" strokeWidth="3.500" /></Line>
            </DockIcon>
            <DockIcon $bg="linear-gradient(#00a2ff, #0056ff 70%)" aria-label="应用中心">
              <svg width="40" height="34" viewBox="0 0 40 34" aria-hidden="true">
                <path d="M17 4h7l7 16" fill="none" stroke="#fff" strokeWidth="5" strokeLinejoin="round" />
                <path d="m18 4-6 15" stroke="#fff" strokeWidth="5" />
                <path d="M1 24c6-10 15-6 22-4 7 1 13-2 15-7 0 8-6 13-14 13-10 0-14-8-23-2Z" fill="#e8f2ff" />
                <path d="M8 25h7l-3 7q-2 1-6 0ZM28 27l6-3 4 8h-6Z" fill="#fff" />
              </svg>
            </DockIcon>
            <DockIcon $bg="linear-gradient(#ff9040, #fb5a22)" aria-label="示例">
              <svg width="28" height="36" viewBox="0 0 28 36" aria-hidden="true">
                <path d="M14 0a13 13 0 0 1 13 13c0 8-5 9-6 17H7C6 22 1 21 1 13A13 13 0 0 1 14 0Z" fill="#fff3ea" />
                <path d="M5 14q0-8 8-10.500" fill="none" stroke="#ff9a62" strokeWidth="1.600" strokeLinecap="round" />
                <path d="M9 32h10M10 34.500h8" stroke="#fff3ea" strokeWidth="1.500" />
              </svg>
            </DockIcon>
            <DockIcon $bg="linear-gradient(#12dfcc, #1792e6)" aria-label="云端">
              <svg width="44" height="30" viewBox="0 0 44 30" aria-hidden="true">
                <path d="M8 28a7.500 7.500 0 0 1 1-15A13 13 0 0 1 34 12a8 8 0 0 1 2 16Z" fill="#e6eef2" />
              </svg>
            </DockIcon>
          </Dock>
          <FileManager />
        </Desktop>
        <ExplorerShadow />
        <LocalExplorer />
        <MarkerBox />
        <Marker width="280" height="70" viewBox="0 0 280 70" aria-hidden="true">
          <path d="M29 23 272 65" stroke="#e5403f" strokeWidth="3.500" />
          <path d="M8 20 32 12 28 33Z" fill="#e5403f" />
        </Marker>
        <MarkerText>直接拖拽即可</MarkerText>
      </Page>
    </>
  );
}
